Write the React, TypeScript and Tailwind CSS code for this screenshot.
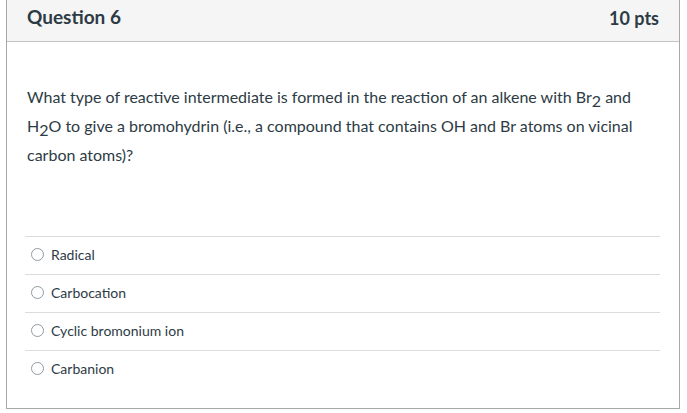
const answers = ['Radical', 'Carbocation', 'Cyclic bromonium ion', 'Carbanion']

function Sub({ children }: { children: React.ReactNode }) {
  return <span className="relative top-[4px]">{children}</span>
}

export default function App() {
  return (
    <div className="h-[413px] w-[687px] bg-white pl-[6px] text-[#2d3b45]" style={{ fontFamily: 'Lato, "Open Sans", sans-serif' }}>
      <div className="flex h-[409px] w-[674px] flex-col border-x border-b border-[#a8a8a8]">
        <div className="flex h-[42px] items-start justify-between border-b border-[#c4c4c4] bg-[#f5f5f5] pt-[5px] pl-[20px] pr-[20px]">
          <span className="text-[19px] leading-[24px] font-bold">Question 6</span>
          <span className="text-[18px] leading-[26px] font-bold">10 pts</span>
        </div>
        <div className="flex flex-1 flex-col pt-[40px] pl-[20px] pr-[19px]">
          <p className="w-[615px] text-[16px] leading-[29px]">
            What type of reactive intermediate is formed in the reaction of an alkene with Br<Sub>2</Sub> and H<Sub>2</Sub>O to give a bromohydrin (i.e., a compound that contains OH and Br atoms on vicinal carbon atoms)?
          </p>
          <div className="mt-[67px] ml-[-2px]">
            {answers.map(a => (
              <div key={a} className="flex h-[38px] items-center gap-[7px] border-t border-[#dadde0] pb-[3px] pl-[6px] text-[14px]">
                <span className="h-[13px] w-[13px] rounded-full border border-[#8f9aa2] bg-white" />
                <span>{a}</span>
              </div>
            ))}
          </div>
        </div>
      </div>
    </div>
  )
}
